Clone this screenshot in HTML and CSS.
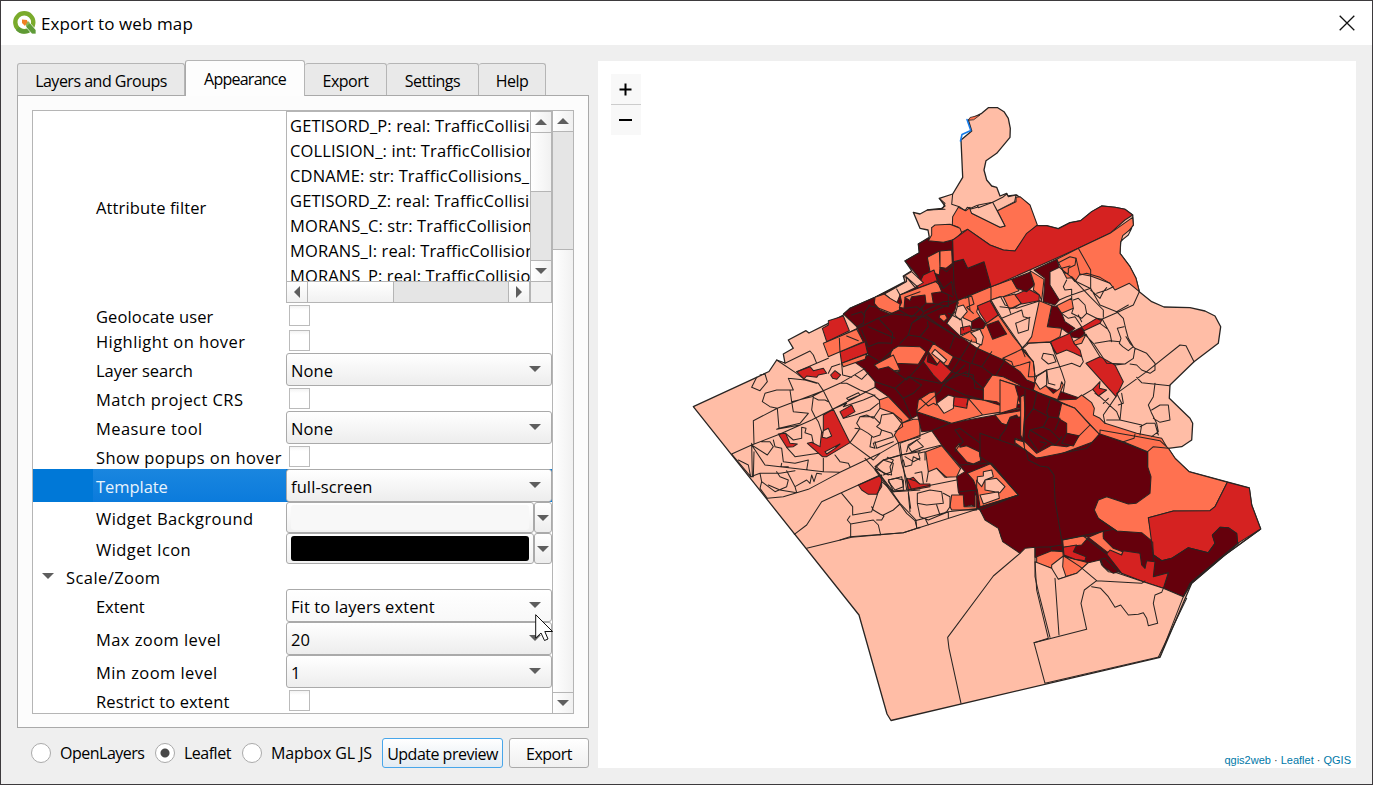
FILE: index.html
```html
<!DOCTYPE html>
<html lang="en">
<head>
<meta charset="utf-8">
<title>Export to web map</title>
<link rel="stylesheet" href="styles.css">
</head>
<body>
<div class="window">
  <header class="titlebar">
    <svg class="logo" viewBox="0 0 24 24" width="24" height="24">
      <circle cx="11.3" cy="11.3" r="9" fill="none" stroke="#7aab2c" stroke-width="4.4"/>
      <path d="M4.5 17.5A9 9 0 0 0 17 18.5" fill="none" stroke="#5f9a35" stroke-width="4.3"/>
      <path d="M13 12L17 12 23 19 23 23 19 23 13 16Z" fill="#5f9b38" stroke="#fff" stroke-width=".7"/>
      <path d="M13 16L17 12 15 10 13 12.500Z" fill="#8cb65a"/>
      <path d="M9 8.500L14 9 14.500 11 12 15 9 12Z" fill="#ef8023"/>
    </svg>
    <span class="title">Export to web map</span>
    <svg class="close" viewBox="0 0 16 16" width="16" height="16"><path d="M.7.7L15.300 15.300M15.300.7L.7 15.300" stroke="#111" stroke-width="1.300"/></svg>
  </header>

  <main class="body">
    <section class="left">
      <nav class="tabs">
        <div class="tab t1"><span>Layers and Groups</span></div>
        <div class="tab t2 active"><span>Appearance</span></div>
        <div class="tab t3"><span>Export</span></div>
        <div class="tab t4"><span>Settings</span></div>
        <div class="tab t5"><span>Help</span></div>
      </nav>
      <div class="panel">
        <div class="tree">
          <div class="rows">
            <div class="row attr"><div class="label">Attribute filter</div>
              <div class="listbox">
                <div class="list">
                  <div>GETISORD_P: real: TrafficCollisions</div>
                  <div>COLLISION_: int: TrafficCollisions</div>
                  <div>CDNAME: str: TrafficCollisions_</div>
                  <div>GETISORD_Z: real: TrafficCollisions</div>
                  <div>MORANS_C: str: TrafficCollisions</div>
                  <div>MORANS_I: real: TrafficCollisions</div>
                  <div>MORANS_P: real: TrafficCollisions</div>
                </div>
                <div class="vbar inner"><div class="sb"><i class="up"></i></div><div class="thumb"></div><div class="track"></div><div class="sb last"><i class="down"></i></div></div>
                <div class="hbar"><div class="hb"><i class="lf"></i></div><div class="hthumb"></div><div class="htrack"></div><div class="hb"><i class="rt"></i></div></div>
                <div class="corner"></div>
              </div>
            </div>
            <div class="row"><div class="label">Geolocate user</div><div class="check"></div></div>
            <div class="row"><div class="label wide">Highlight on hover</div><div class="check"></div></div>
            <div class="row tall"><div class="label tight">Layer search</div><div class="combo">None<i class="down"></i></div></div>
            <div class="row"><div class="label wide">Match project CRS</div><div class="check"></div></div>
            <div class="row tall"><div class="label wide">Measure tool</div><div class="combo">None<i class="down"></i></div></div>
            <div class="row"><div class="label wide">Show popups on hover</div><div class="check"></div></div>
            <div class="row tall selected"><div class="label tight">Template</div><div class="combo">full-screen<i class="down"></i></div></div>
            <div class="row mid"><div class="label wide">Widget Background</div><div class="swatch"><b class="pale"></b></div><div class="drop"><i class="down"></i></div></div>
            <div class="row mid"><div class="label wide">Widget Icon</div><div class="swatch"><b class="black"></b></div><div class="drop"><i class="down"></i></div></div>
            <div class="row group"><i class="down"></i><span class="wide">Scale/Zoom</span></div>
            <div class="row tall"><div class="label tight">Extent</div><div class="combo hot">Fit to layers extent<i class="down"></i></div></div>
            <div class="row tall"><div class="label wide">Max zoom level</div><div class="combo">20<i class="down"></i></div></div>
            <div class="row tall"><div class="label wide">Min zoom level</div><div class="combo">1<i class="down"></i></div></div>
            <div class="row"><div class="label">Restrict to extent</div><div class="check"></div></div>
          </div>
          <div class="vbar outer"><div class="sb"><i class="up"></i></div><div class="track"></div><div class="thumb"></div><div class="sb last"><i class="down"></i></div></div>
        </div>
      </div>
      <footer class="actions">
        <span class="radio"></span><span class="rl r1">OpenLayers</span>
        <span class="radio on"></span><span class="rl r2">Leaflet</span>
        <span class="radio"></span><span class="rl r3">Mapbox GL JS</span>
        <button class="btn primary"><span>Update preview</span></button>
        <button class="btn export"><span>Export</span></button>
      </footer>
    </section>

    <section class="preview">
      <svg class="map" viewBox="598 61 758 707" width="758" height="707">
        <path class="l edge" d="M693.3 406.700L756.700 377.300 769 371.500 776.700 360 785 363 783.300 354 793.300 348.300 788.300 340 806 330.700 809 333 828.300 323.300 843.300 315 850 308.300 875 297.300 905 281.700 903.300 276 911.700 270.700 905 261 919.300 252.700 918.300 244 929.300 237.300 928 230 920 228.300 913.300 212.300 920 214 927.300 210 941.700 208.300 945 206 939.300 198.300 952.700 194 962.700 177.300 961 140 971.700 131 968.300 120 981.700 113.300 988.300 107.700 997.700 107.700 1004 111.700 1008.300 118.300 1010.300 128.300 1010 137.300 996.700 153.300 986 160.700 984 170 986.700 180 991.700 186 996.700 187.300 1000 196 1006.700 193.300 1008 196 1016.700 195 1029.300 205 1036.700 225.700 1046.700 225.700 1058.300 228.700 1070 222.700 1080.700 220.700 1091.700 211.700 1101.700 206 1115 207.300 1125 209.300 1132.700 215 1133.300 225 1120.700 241.700 1120 253.300 1130 266.700 1136 278.300 1139.300 291.700 1151.700 301.700 1164 307 1190 307.700 1205 311 1215 316 1220.700 326.700 1218.300 343.300 1194 361.700 1170 385 1169.300 398.300 1190 418.300 1192.700 423.300 1191.700 440 1181.700 446.700 1168.300 448.300 1175 458.300 1189 471.700 1249.300 488 1251.700 505 1260.700 529 1225 555 1191.700 583.300 1160 657.300 891 720.500 887 714 859 615Z"/>

        <!-- northern neck and central city -->
        <g transform="translate(840 180) scale(.33333)">
          <path class="d" d="M10 402L30 385 105 352 190 310 235 290 195 243 238 218 235 192 265 175 310 187 338 180 342 245 370 238 383 265 432 245 453 295 453 320 352 362 345 390 320 430 362 470 412 505 495 540 540 575 590 610 720 655 720 700 560 700 240 695 235 705 210 718 145 650 105 622 105 605 70 565 42 545 85 525 50 440Z"/>
          <path class="o" d="M355 82L378 92 390 82 395 100 480 142 495 138 472 92 528 65 528 52 540 50 570 75 592 135 560 165 525 213 490 210 450 195 383 148 362 158 355 142 337 135 338 110Z"/>
          <path class="l" d="M390 88L412 82 415 75 458 67 495 138 480 142 395 100ZM458 67L488 52 500 42 505 50 528 45 524 65 472 92Z"/>
          <path class="n" d="M338 42L335 73 358 80 375 92 382 82 392 85 412 76 415 83 458 67M298 55L315 70 308 86M262 90L315 88M275 143L337 135"/>
          <path class="o" d="M275 143L285 135 330 133 360 145 365 158 345 178 310 187 265 182 275 165ZM300 213L335 210 337 250 318 265 300 262ZM262 232L298 213 300 262 298 285 270 275Z"/>
          <path class="r" d="M232 322L250 285 282 270 292 303 232 325Z"/>
          <path class="l" d="M190 290L215 275 250 308 225 322 200 292ZM133 342L200 305 198 290 232 320 180 345 170 370 150 355Z"/>
          <path class="n" d="M170 327L180 345 210 335"/>
          <path class="o" d="M105 352L133 342 150 355 180 372 178 390 150 402 120 390 103 370ZM180 345L292 303 305 335 275 340 280 370 258 370 255 345 215 350 210 362 195 352 192 385 178 382 185 367Z"/>
          <path class="o" d="M155 510L175 498 240 500 258 515 235 553 165 550 150 530ZM103 555L150 530 160 555 178 575 165 575 140 557 115 565ZM300 405L315 402 322 415 312 425 297 412ZM280 490L340 530 325 558 290 550 265 515Z"/>
          <path class="r" d="M265 515L262 545 290 556 300 542 335 575 305 610 280 585 250 545Z"/>
          <path class="l" d="M285 508L320 540 312 550 275 520Z"/>
          <path class="o" d="M352 362L453 320 453 362 415 378 410 395 420 410 395 425 372 415 352 390ZM453 320L515 298 537 332 490 350 480 350 453 360Z"/>
          <path class="l" d="M352 380L370 375 382 395 360 420 345 405Z"/>
          <path class="n" d="M375 355L395 348 402 372 380 382 400 400M385 345L390 390"/>
          <path class="r" d="M412 378L450 362 475 405 440 430 420 400ZM362 443L390 437 395 452 362 465Z"/>
          <path class="o" d="M453 360L475 405 520 470 560 520 490 540 412 505 425 490 395 485 362 470 395 452 430 445 440 430 475 405Z"/>
          <path class="d" d="M440 435L475 422 500 462 458 478ZM395 425L420 412 437 430 430 445 395 447Z"/>
          <path class="l" d="M392 458L420 448 430 470 425 495 410 490 408 475ZM453 360L482 350 495 375 530 385 600 362 590 430 572 485 548 505 510 450 485 415Z"/>
          <path class="o" d="M490 350L525 342 545 370 508 388ZM490 540L555 510 580 550 585 610 560 600 540 575Z"/>
          <path class="r" d="M525 345L565 327 598 345 597 362 545 372Z"/>
          <path class="d" d="M515 298L570 277 583 315 560 335 530 325Z"/>
          <path class="o" d="M570 272L612 298 605 362 598 345 580 330 583 312Z"/>
          <path class="n" d="M485 415L545 390 550 410 568 415 565 450 535 460 527 430 570 412M508 388L512 400M300 262L320 275 342 250M285 280L310 325 335 305 340 345M338 180L342 320 355 370M352 362L255 405 215 430M0 470L115 415 155 402 250 410 350 470M90 375L75 395 70 430 50 440M35 405L65 395 75 410M115 415L158 460 155 490 115 488 85 500 65 450M155 400L105 380 85 377M178 390L215 412 258 370M195 385L230 380 250 395 310 365 352 362M255 405L290 430 360 475M215 430L250 400 245 380M215 430L205 465 180 490M205 465L240 470 265 440 262 425M240 470L285 490M85 525L120 545 158 510M335 575L380 505 395 480M345 465L330 505M320 430L345 395M412 505L395 550 425 560 455 515M340 530L390 550 385 590 335 575M425 560L465 590 495 540M250 545L200 600 165 575M105 605L165 625 205 590 300 610M165 625L190 655 220 640 245 615 205 590M190 655L215 715M300 610L380 575M390 590L435 630 430 655M440 600L470 590"/>
          <path class="n" d="M338 350L305 335M310 325L285 303M325 400L365 420 370 450M85 440L165 475M195 352L240 335M280 370L325 380 325 345"/>
        </g>

        <!-- west suburbs -->
        <g transform="translate(680 300) scale(.33333)">
          <path class="r" d="M427 85L445 75 445 62 490 48 508 92 440 125ZM480 155L555 125 563 160 485 190ZM350 215L390 200 400 212 430 205 440 220 415 225 410 232 380 228 372 237ZM452 225L465 212 482 225 470 238 458 235ZM480 335L515 315 525 335 490 355ZM430 345L460 328 510 428 440 470 427 470 382 430 395 427 420 440 425 395 430 400ZM295 402L317 400 330 430 352 432 340 440 320 442ZM535 555L605 525 605 560 590 583 565 583 545 570ZM680 540L700 532 725 560 685 570Z"/>
          <path class="l" d="M430 392L445 385 455 408 440 415 427 412ZM435 455L480 432 465 445 440 462Z"/>
          <path class="o" d="M430 130L530 88 550 125 480 155 445 170ZM485 190L560 162 555 178 490 200ZM583 195L640 165 660 210 642 212 625 200 595 208ZM598 300L625 290 690 358 665 370 640 340 600 325ZM665 370L700 358 720 358 720 410 655 428 643 405Z"/>
          <path class="n" d="M230 232L215 262 240 272 262 245 255 222 240 225M315 190L390 153 400 165 410 190M290 180L350 220 372 237 415 250 430 272 458 328M350 215L445 175M430 272L480 250 515 230 555 205M485 190L488 225 515 232M478 115L480 155M500 108L535 122M480 192L455 200 445 220M325 235L340 270 330 270 290 270 255 280 247 305 270 320 292 325 430 272M325 235L375 240 410 250M292 325L220 362 222 430M292 325L297 385 360 370 385 340 340 335 335 305 330 270M335 305L395 290 430 272M400 290L395 330 405 350 415 365 425 395M400 292L415 300 435 300 445 305M155 462L215 435 300 402 395 360 458 328 585 262M215 435L255 495 430 515 480 517M215 430L217 530M222 455L220 530 212 530 205 495 175 480M155 462L212 530 240 520 300 520 345 512M240 520L245 545 285 575 320 560 325 540 300 530 290 515M245 545L240 565 262 595M265 555L300 570 350 578M320 512L345 560 350 578M345 560L380 540 390 550 395 525 402 545 410 520 425 522M262 595L310 590 385 568 480 517 600 460 655 428M215 435L262 465 280 440 270 425 245 425M280 420L285 440 305 445 310 485 345 490 385 480 380 510M305 490L303 500 325 500M317 400L340 420 365 415 365 382 378 385 375 398 395 405 400 430M297 385L290 388 360 375M320 442L345 470 415 460M430 475L430 515M465 465L480 485 505 490 510 500M510 428L580 480 600 460M510 428L540 385 530 370 540 350 560 345 580 355 600 325M458 328L500 310 490 320 550 300 585 285M500 295L535 278 540 285 505 300ZM480 250L500 250 540 270 580 285 598 300M525 225L545 238 565 218M490 355L525 345 570 330 595 310M540 350L580 350 600 370 605 345 640 340M600 370L590 380 605 390 600 405 580 412 565 400 545 388 525 385M605 390L635 400 640 410 580 430 585 445 570 440 575 410M585 425L590 445 640 425M640 340L665 360 668 380 645 395"/>
          <path class="n" d="M343 703L380 675 425 605 535 555 600 525M380 745L515 712 670 698 720 682M485 580L518 620 518 645 575 635 590 590 605 545M510 648L502 660 512 672 580 660 595 675 602 705M512 672L512 712M575 620L580 630 600 642 612 648 605 660 590 660M610 645L640 630 660 612M555 475L600 525 660 610 708 660 710 685 720 683M585 500L610 480 660 465 720 455M605 545L640 575 690 572 720 570M655 428L665 490 680 540 692 625M588 500L612 520 635 525 630 500 640 480 622 472M625 540L650 535 670 540 670 570 640 573ZM670 480L675 500 695 495 700 470 720 480M680 455L685 435 720 415"/>
        </g>

        <!-- east side and river bank -->
        <g transform="translate(1000 190) scale(.33333)">
          <path class="r" d="M-142 150L-97 118-30 165 10 180 45 183 80 130 110 107 140 107 175 116 210 98 242 92 275 65 305 48 345 52 375 58 398 75 375 90 330 130 235 175 0 280-27 290-48 215-97 235-110 208-140 215Z"/>
          <path class="o" d="M235 175L330 130 398 82 400 105 362 155 360 190 390 230 408 265 418 305 388 280 345 300 330 280 272 258 272 240ZM170 208L235 175 272 240 272 258 240 252 225 275 215 263 200 265Z"/>
          <path class="l" d="M364 152L368 137 395 115 385 135Z"/>
          <path class="n" d="M175 218L210 200 228 205 225 225 205 235 205 250 195 250 185 235 210 228M178 232L215 262 270 320 310 360 310 382"/>
          <path class="d" d="M102 240L170 208 178 232 150 245 150 285 178 330 165 345 130 335 135 265ZM155 347L175 350 185 370 195 395 225 415 205 430 185 415 142 410ZM208 430L245 412 255 430 240 445 210 440Z"/>
          <path class="o" d="M118 332L155 347 142 410 185 415 180 440 152 455 80 460 95 440ZM170 347L215 325 220 355 185 370ZM220 455L258 433 245 460 225 465ZM8 505L65 478 100 515 105 560 85 560 90 515 60 525 40 530 35 515ZM100 600L110 560 160 610 180 595 185 575 190 585 170 635Z"/>
          <path class="r" d="M152 455L210 430 222 460 240 480 245 500 220 488 200 480 170 492 160 480ZM245 412L290 385 307 388 300 400 252 422ZM258 520L300 500 345 525 370 575 348 620ZM278 598L300 575 298 595 320 600 295 618Z"/>
          <path class="o" d="M228 628L245 615 275 638 283 655 280 675 300 685 315 700 410 730 485 745 500 770 445 790 440 780 400 760 300 735 225 655 120 610 175 630Z"/>
          <path class="l" d="M105 575L110 560 140 540 140 585 120 598Z"/>
          <path class="n" d="M272 258L272 295 300 345 350 365 385 345M272 295L200 320 178 330M195 300L190 290 200 270M195 300L215 298 215 325M290 310L320 300 340 290M272 300L300 325 310 305 320 293M228 205L240 255 260 250 300 262 330 280M220 330L235 325 255 345 260 370 245 385 215 370 220 355M260 370L300 390 350 368 400 345 418 305M350 365L370 385 378 420 385 445 400 470 385 482 368 470 358 460 363 445 352 415 372 410M378 440L390 460 405 475 400 505 375 522 320 520 280 460 252 430M258 433L300 500M285 460L330 452 360 455M307 388L330 430 335 455M300 400L320 415M185 370L205 385 225 380 245 410M235 375L245 395M405 475L440 490 465 520 465 540 450 550 425 540 410 525 390 522M350 610L440 545 540 465 558 467 582 515M410 562L425 578 510 587M465 580L460 620 445 645 455 670 470 700 475 725M455 660L480 645 505 645 510 690 480 697 460 685M345 525L375 522M350 610L365 640 360 690 425 705 420 735M348 620L310 675 315 700M278 598L250 615M285 610L300 620 350 665 360 690M310 640L325 625M320 690L360 690M365 610L370 640 355 645M475 725L455 740M420 710L440 700 465 700 475 735M80 460L65 475 75 500M80 460L150 457 170 492M65 475L100 515 105 560M130 490L160 495 168 515 145 522 125 505 130 490M160 480L185 545 195 575 190 605M180 530L215 520 240 530 250 515 245 500M105 560L140 540 180 530M140 540L145 580 165 585M0 350L40 355 65 340M215 260L230 275 270 295"/>
        </g>

        <!-- south-centre -->
        <g transform="translate(840 360) scale(.33333)">
          <path class="d" d="M230 155L330 190 465 165 490 160 490 120 700 180 760 480 760 580 485 535 475 500 440 480 420 450 395 435 375 440 355 395 350 350 375 335 305 255 275 212 245 215Z"/>
          <path class="o" d="M235 120L270 98 285 95 290 130 385 115 428 165 335 190 230 155ZM385 115L430 120 500 142 550 145 428 165ZM430 85L457 45 490 50 540 75 545 130 500 145 470 125 430 120ZM540 105L555 100 560 140 550 150 545 230 535 220 545 190 530 165 510 172 500 195 485 190 465 165 555 150 545 130ZM257 275L305 257 362 325 350 350 315 352 290 325 265 335ZM345 265L358 250 360 262 380 257 418 275 422 302 400 312 380 305ZM330 440L335 405 370 405 372 440 405 440 405 395 410 410 410 450 335 450ZM382 340L455 310 537 405 420 440 412 390 400 360Z"/>
          <path class="l" d="M290 130L325 105 343 110 340 145 312 160ZM412 365L412 350 430 348 430 335 455 330 460 350 435 360 425 380ZM435 360L470 355 495 380 480 398 435 390ZM420 405L475 395 478 415 430 432Z"/>
          <path class="r" d="M343 110L385 115 380 145 340 137ZM200 355L225 362 240 372 270 372 270 380 215 390Z"/>
          <path class="n" d="M240 115L265 138 280 130 290 135M385 115L380 135M230 155L300 95 310 75 375 15M310 75L375 105 430 120M375 40L400 45 405 85 430 90M345 210L360 205 435 260 460 310M345 210L370 245 355 260 345 275M180 250L275 212 330 190M180 250L185 285 305 255M205 260L230 240 250 260 215 275ZM185 285L200 390 160 395 105 325 130 300 185 285M130 300L160 310 155 335 130 345M200 390L350 360M225 340L245 335 250 370M265 335L260 365M290 325L320 352M232 400L270 390 305 395 310 430 260 435 232 430ZM310 400L330 410 330 440 320 455 300 465 290 435M232 430L240 470 265 480 325 455M225 482L325 455 420 445M325 455L325 475M210 455L205 400M225 482L200 460 105 330M230 500L225 482 255 475 265 495M0 540L30 530 190 518 420 445M360 395L410 390 410 360M360 315L460 310M195 290L220 305 240 295 235 280 255 275 255 300M105 325L145 345M145 360L185 350 190 380 165 390 145 365"/>
        </g>

        <!-- inner east wards -->
        <g transform="translate(1000 190) scale(.33333)">
          <path class="d" d="M0 570L95 600 220 655 300 735 400 760 440 785 440 850 0 850 0 740 15 720 30 685 65 680 75 665 45 610 45 585Z"/>
          <path class="o" d="M0 570L45 585 55 620 50 655 0 670ZM62 620L72 615 75 660 68 750 62 735ZM185 640L225 655 270 705 300 735 280 755 160 800 100 805 75 780 45 760 45 745 75 755 110 790 155 765 200 770 215 765 235 740 200 730 200 700 175 685Z"/>
          <path class="d" d="M185 760L200 730 237 737 220 768Z"/>
          <path class="n" d="M75 600L72 780 110 808M110 610L100 655 75 690M100 655L145 680 180 685M150 630L140 665 145 680 130 710 90 720M90 720L85 740 115 785M90 720L165 765 185 740M125 710L150 720 180 750M180 685L165 720M120 780L140 760 120 755M270 705L235 740"/>
        </g>

        <!-- southern wards -->
        <g transform="translate(980 430) scale(.33333)">
          <path class="d" d="M0 10L130 55 170 85 320 55 360 10 500 65 600 150 720 280 775 340 635 460 610 500 550 475 400 420 165 382 165 352 135 355 120 370 68 335 55 295 15 270 0 240 115 195 30 100 0 80Z"/>
          <path class="o" d="M360 0L475 20 540 32 565 55 585 85 627 125 742 157 705 230 690 242 580 243 505 263 518 335 485 308 410 303 355 265 343 240 355 210 380 200 445 222 468 220 510 190 513 140 503 110 503 65 430 35 360 12Z"/>
          <path class="r" d="M742 157L808 174 815 225 842 297 773 340 770 310 745 293 720 292 697 315 705 340 685 368 625 353 575 385 545 392 520 375 505 263 580 243 690 242 705 230Z"/>
          <path class="d" d="M773 340L770 310 745 293 720 292 697 315 705 340 685 368 625 353 575 385 545 392 520 375 520 440 565 428 550 475 610 500 635 455Z"/>
          <path class="o" d="M248 330L310 318 325 322 305 345 250 352ZM325 322L370 303 370 325 400 355 428 365 425 375 380 365ZM170 380L215 362 250 365 255 380 325 398 290 430 240 445 215 415 170 400ZM105 28L130 35 135 60 105 38Z"/>
          <path class="l" d="M250 378L215 405 215 435 235 448 258 440 248 410Z"/>
          <path class="r" d="M250 352L290 345 280 365 318 380 315 392 285 388 252 375ZM380 372L390 360 425 375 430 362 480 370 485 405 495 415 500 392 525 395 520 440 565 428 550 475 490 455 425 430Z"/>
          <path class="l" d="M165 395L215 415 235 448 290 430 325 398 360 390 365 405 385 425 410 428 490 455 550 475 610 500 540 680 195 760 162 638 205 625 170 480Z"/>
          <path class="d" d="M362 388L375 385 415 425 400 430 370 410Z"/>
          <path class="n" d="M120 370L40 438-97 622-93 655-57 820M165 352L165 440 175 485 210 622M162 638L320 598 303 520 313 480 350 452M225 445L237 615M252 378L300 410 350 452 485 460 495 453M335 470L362 475 385 500 405 532 422 525 445 555 475 553 490 548 500 565 505 587 533 580 520 520 525 495 545 487 550 475M170 352L210 350 245 345M210 350L215 362 250 362M138 60L145 90 180 108 205 112 222 135 225 210 245 330 250 380M245 330L400 298M355 265L410 303M503 65L520 50 565 55M503 110L503 65M430 35L462 25 465 12M310 318L380 372M370 320L370 305M0 100L35 100 115 195 0 232M518 335L520 375 545 392M620 505L535 682M838 300L725 382 630 460 610 500"/>
        </g>
        <path class="o" d="M968.500 120L970 117.500 980 115 974 119.500Z"/>
        <path class="focus" d="M967 119.500L970.800 130.500 962 134.500 960.500 141"/>
      </svg>
      <div class="zoom"><div><svg viewBox="0 0 13 13" width="13" height="13"><path d="M6.500 .5V12.500M.5 6.500H12.500" stroke="#000" stroke-width="2"/></svg></div><div><svg viewBox="0 0 13 13" width="13" height="13"><path d="M0 6H13" stroke="#000" stroke-width="2"/></svg></div></div>
      <div class="credit"><a>qgis2web</a> · <a>Leaflet</a> · <a>QGIS</a></div>
    </section>
  </main>
  <svg class="cursor" viewBox="0 0 19 28" width="19" height="28"><path d="M.7.7V24L6 19 9.500 26.500 13 25 9.800 17.500H17.500Z" fill="#fff" stroke="#111" stroke-width="1"/></svg>
</div>
</body>
</html>
```
FILE: styles.css
```css
* { box-sizing: border-box; }
body { margin: 0; font-family: "Open Sans", "Noto Sans", sans-serif; font-size: 16.500px; color: #000; }
.window { position: relative; width: 1373px; height: 785px; border: 1px solid #3d3a3d; background: #efefef; overflow: hidden; }
.titlebar { height: 44px; background: #fff; display: flex; align-items: center; padding: 0 17px 0 12px; }
.title { margin-left: 4px; flex: 1; font-size: 17px; letter-spacing: .1px; }
.close { margin-top: -1px; }
.body { display: flex; justify-content: space-between; padding: 16px 16px 0; }
.left { width: 572px; }

.tabs { display: flex; align-items: flex-end; height: 34px; }
.tab { height: 32px; border: 1px solid #b5b5b5; border-bottom: 0; border-left: 0; border-radius: 3px 3px 0 0; background: #e9e9e9; display: flex; justify-content: center; align-items: center; font-size: 16px; padding-top: 2px; }
.tab span, .rl, .btn span { letter-spacing: -.5px; white-space: nowrap; }
.t1 { width: 168px; border-left: 1px solid #b5b5b5; }
.t2 { width: 120px; }
.tab.t2 span { letter-spacing: -.75px; }
.t3 { width: 82px; }
.t4 { width: 92px; }
.t5 { width: 67px; }
.tab.active { height: 36px; margin-bottom: -1px; background: #fdfdfd; border-left: 1px solid #a9a9a9; z-index: 1; padding-top: 1px; }
.panel { height: 633px; border: 1px solid #a9a9a9; background: #fcfcfc; padding: 14px; }

.tree { width: 542px; height: 604px; border: 1px solid #b5b5b5; background: #fff; display: flex; }
.rows { width: 519px; }
.row { height: 25px; display: flex; align-items: center; padding-left: 60px; }
.row.tall { height: 33px; }
.row.mid { height: 31px; }
.row.attr { height: 192px; }
.label { width: 193px; height: 100%; display: flex; align-items: center; padding: 1px 0 0 3px; white-space: nowrap; letter-spacing: .12px; }
.label.tight { letter-spacing: -.05px; }
.wide, .label.wide { letter-spacing: .43px; }
.selected { background: #0078d7; width: 519px; }
.selected .label { background: linear-gradient(#1a86df, #0b7bdc); color: #e8f3fc; }
.check { width: 21px; height: 21px; margin: -1px 0 0 3px; border: 1px solid #bbb; background: linear-gradient(#f3f3f3, #fff 4px); }
.combo { width: 266px; height: 33px; border: 1px solid #aaa; border-radius: 3px; background: linear-gradient(#fff, #ededed); display: flex; align-items: center; justify-content: space-between; padding: 1px 10px 0 4px; letter-spacing: .1px; }
.combo i { margin-top: -2px; }
.combo.hot { background: linear-gradient(#fff, #f8f8f8); }
.swatch { width: 248px; height: 31px; border: 1px solid #aaa; border-radius: 3px; background: linear-gradient(#fff, #f1f1f1); padding: 2px 4px; }
.swatch b { display: block; height: 25px; border-radius: 3px; }
.pale { background: #f8f8f8; }
.black { background: #000; }
.drop { width: 18px; height: 31px; border: 1px solid #aaa; border-radius: 3px; background: linear-gradient(#fff, #ededed); display: flex; align-items: center; justify-content: center; }
.group { padding-left: 9px; }
.group i { margin-top: -2px; }
.group span { margin: 1px 0 0 12px; }

i { display: block; border: 0 solid transparent; }
i.down { border-width: 6px 6px 0; border-top-color: #5e5e5e; }
i.up { border-width: 0 6px 6px; border-bottom-color: #5e5e5e; }
i.lf { border-width: 6px 6px 6px 0; border-right-color: #5e5e5e; }
i.rt { border-width: 6px 0 6px 6px; border-left-color: #5e5e5e; }

.listbox { width: 266px; height: 192px; border: 1px solid #b5b5b5; display: grid; grid-template: 169px 21px / 243px 21px; }
.list { overflow: hidden; padding: 1px 0 0 3px; white-space: nowrap; letter-spacing: .13px; }
.list div { height: 25px; line-height: 25px; }
.vbar { display: flex; flex-direction: column; border-left: 1px solid #b5b5b5; }
.sb { height: 21px; border-bottom: 1px solid #b5b5b5; display: flex; align-items: center; justify-content: center; background: linear-gradient(90deg, #fff, #f0f0f0); }
.sb.last { border-top: 1px solid #b5b5b5; border-bottom: 0; }
.thumb { background: linear-gradient(90deg, #fff, #f1f1f1); }
.track { background: #e5e5e5; }
.inner .thumb { height: 59px; border-bottom: 1px solid #b5b5b5; }
.inner .track { flex: 1; }
.outer { width: 21px; }
.outer .track { height: 118px; border-bottom: 1px solid #b5b5b5; }
.outer .thumb { flex: 1; }
.hbar { display: flex; border-top: 1px solid #b5b5b5; }
.hb { width: 21px; border-right: 1px solid #b5b5b5; display: flex; align-items: center; justify-content: center; background: linear-gradient(#fff, #f1f1f1); }
.hthumb { width: 86px; border-right: 1px solid #b5b5b5; background: linear-gradient(#fff, #f1f1f1); }
.htrack { flex: 1; background: #e5e5e5; border-right: 1px solid #b5b5b5; }
.corner { background: #f0f0f0; border-left: 1px solid #b5b5b5; border-top: 1px solid #b5b5b5; }

.actions { display: flex; align-items: center; height: 30px; margin-top: 10px; padding-left: 14px; font-size: 16px; }
.radio { width: 20px; height: 20px; border: 1px solid #aaa; border-radius: 50%; background: #fff; flex: none; }
.radio.on { background: radial-gradient(circle, #484848 4px, #fff 5px); }
.rl { margin-left: 9px; }
.r1 { width: 95px; }
.r2 { width: 58px; }
.rl.r3 { width: 111px; letter-spacing: -.1px; }
.btn { height: 30px; border: 1px solid #aaa; border-radius: 3px; background: linear-gradient(#fff, #f0f0f0); font: inherit; padding: 1px 0 0; display: flex; align-items: center; justify-content: center; flex: none; }
.primary { width: 121px; border-color: #48a6ea; background: linear-gradient(#fff, #e3ebf2); }
.export { width: 80px; margin-left: 6px; }

.preview { position: relative; width: 758px; height: 707px; background: #fff; }
.map { display: block; }
.map path { stroke: #282422; stroke-width: 3.100; stroke-linejoin: round; stroke-linecap: round; }
.map path.edge { stroke-width: 1.300; }
.map > path.o { stroke-width: .8; }
.map .l { fill: #ffbda6; }
.map .o { fill: #ff7150; }
.map .r { fill: #d52221; }
.map .d { fill: #65000c; }
.map .n { fill: none; }
.map path.focus { fill: none; stroke: #167be8; stroke-width: 1.600; }
.zoom { position: absolute; left: 13px; top: 13px; width: 30px; }
.zoom div { height: 30px; background: #f8f8f8; display: flex; align-items: center; justify-content: center; padding-right: 1px; }
.zoom div:first-child { height: 31px; border-bottom: 1px solid #ccc; }
.credit { position: absolute; right: 5px; bottom: 1px; font: 11px/14px "Liberation Sans", sans-serif; color: #333; }
.credit a { color: #0078a8; }
.cursor { position: absolute; left: 534px; top: 613px; }
```
